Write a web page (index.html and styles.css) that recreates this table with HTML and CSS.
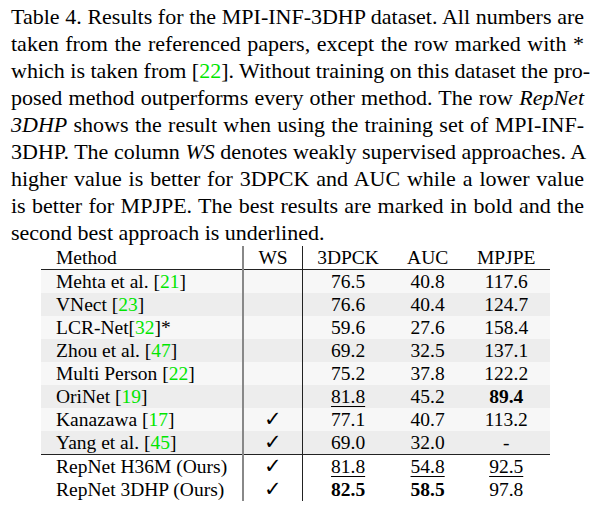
FILE: index.html
```html
<!DOCTYPE html>
<html lang="en">

<head>
    <meta charset="UTF-8">
    <title>Table 4</title>
    <link rel="stylesheet" href="styles.css">
</head>

<body>

    <div class="caption">
        <span class="line">Table 4. Results for the MPI-INF-3DHP dataset. All numbers are</span>
        <span class="line">taken from the referenced papers, except the row marked with *</span>
        <span class="line">which is taken from [<span class="cite">22</span>]. Without training on this dataset the pro-</span>
        <span class="line">posed method outperforms every other method. The row <i>RepNet</i></span>
        <span class="line"><i>3DHP</i> shows the result when using the training set of MPI-INF-</span>
        <span class="line">3DHP. The column <i>WS</i> denotes weakly supervised approaches. A</span>
        <span class="line">higher value is better for 3DPCK and AUC while a lower value</span>
        <span class="line">is better for MPJPE. The best results are marked in bold and the</span>
        <span class="line last">second best approach is underlined.</span>
    </div>

    <table class="results">
        <thead>
            <tr>
                <th class="method">Method</th>
                <th class="ws">WS</th>
                <th class="num c1">3DPCK</th>
                <th class="num c2">AUC</th>
                <th class="num c3">MPJPE</th>
            </tr>
        </thead>
        <tbody class="others">
            <tr>
                <td class="method">Mehta et al. [<span class="cite">21</span>]</td>
                <td class="ws"></td>
                <td class="num">76.5</td>
                <td class="num">40.8</td>
                <td class="num">117.6</td>
            </tr>
            <tr>
                <td class="method">VNect [<span class="cite">23</span>]</td>
                <td class="ws"></td>
                <td class="num">76.6</td>
                <td class="num">40.4</td>
                <td class="num">124.7</td>
            </tr>
            <tr>
                <td class="method">LCR-Net[<span class="cite">32</span>]*</td>
                <td class="ws"></td>
                <td class="num">59.6</td>
                <td class="num">27.6</td>
                <td class="num">158.4</td>
            </tr>
            <tr>
                <td class="method">Zhou et al. [<span class="cite">47</span>]</td>
                <td class="ws"></td>
                <td class="num">69.2</td>
                <td class="num">32.5</td>
                <td class="num">137.1</td>
            </tr>
            <tr>
                <td class="method">Multi Person [<span class="cite">22</span>]</td>
                <td class="ws"></td>
                <td class="num">75.2</td>
                <td class="num">37.8</td>
                <td class="num">122.2</td>
            </tr>
            <tr>
                <td class="method">OriNet [<span class="cite">19</span>]</td>
                <td class="ws"></td>
                <td class="num"><u>81.8</u></td>
                <td class="num">45.2</td>
                <td class="num"><b>89.4</b></td>
            </tr>
            <tr>
                <td class="method">Kanazawa [<span class="cite">17</span>]</td>
                <td class="ws"><span class="check">&#10003;</span></td>
                <td class="num">77.1</td>
                <td class="num">40.7</td>
                <td class="num">113.2</td>
            </tr>
            <tr>
                <td class="method">Yang et al. [<span class="cite">45</span>]</td>
                <td class="ws"><span class="check">&#10003;</span></td>
                <td class="num">69.0</td>
                <td class="num">32.0</td>
                <td class="num">-</td>
            </tr>
        </tbody>
        <tbody class="ours">
            <tr>
                <td class="method">RepNet H36M (Ours)</td>
                <td class="ws"><span class="check">&#10003;</span></td>
                <td class="num"><u>81.8</u></td>
                <td class="num"><u>54.8</u></td>
                <td class="num"><u>92.5</u></td>
            </tr>
            <tr>
                <td class="method">RepNet 3DHP (Ours)</td>
                <td class="ws"><span class="check">&#10003;</span></td>
                <td class="num"><b>82.5</b></td>
                <td class="num"><b>58.5</b></td>
                <td class="num">97.8</td>
            </tr>
        </tbody>
    </table>

</body>

</html>
```

FILE: styles.css
```css
/* Paper table: caption + results */
body {
    font-family: "Liberation Serif", "Times New Roman", serif;
    color: #000;
    background-color: white;
    margin: 0;
    padding: 3px 14px 0 11px;
}

.caption {
    width: 573px;
    font-size: 22px;
    line-height: 27px;
}

.caption .line {
    display: block;
    white-space: nowrap;
    text-align: justify;
    text-align-last: justify;
}

.caption .line.last {
    text-align-last: left;
}

.cite {
    color: #00e600;
}

.results {
    margin-left: 30px;
    width: 509px;
    border-collapse: collapse;
    font-size: 19.5px;
    line-height: 23px;
}

.results th,
.results td {
    padding: 0;
    height: 23px;
    font-weight: normal;
    white-space: nowrap;
}

.results .method {
    width: 186px;
    padding-left: 15px;
    text-align: left;
    border-right: 2px solid #888;
}

.results .ws {
    width: 59px;
    text-align: center;
    border-right: 1px solid #222;
}

.check {
    font-family: "DejaVu Serif", serif;
    font-size: 21px;
    line-height: 23px;
}

.results .num {
    text-align: center;
}

.results .c1 {
    width: 90px;
}

.results .c2 {
    width: 70px;
}

.results .c3 {
    width: 88px;
}

.results thead tr {
    border-bottom: 1px solid #222;
}

.others tr:nth-child(odd) {
    background-color: #f7f7f7;
}

.others tr:nth-child(even) {
    background-color: #ededed;
}

.ours tr:first-child {
    border-top: 1px solid #222;
}

.results u {
    text-underline-offset: 3px;
}

.results b {
    font-weight: bold;
}
```
